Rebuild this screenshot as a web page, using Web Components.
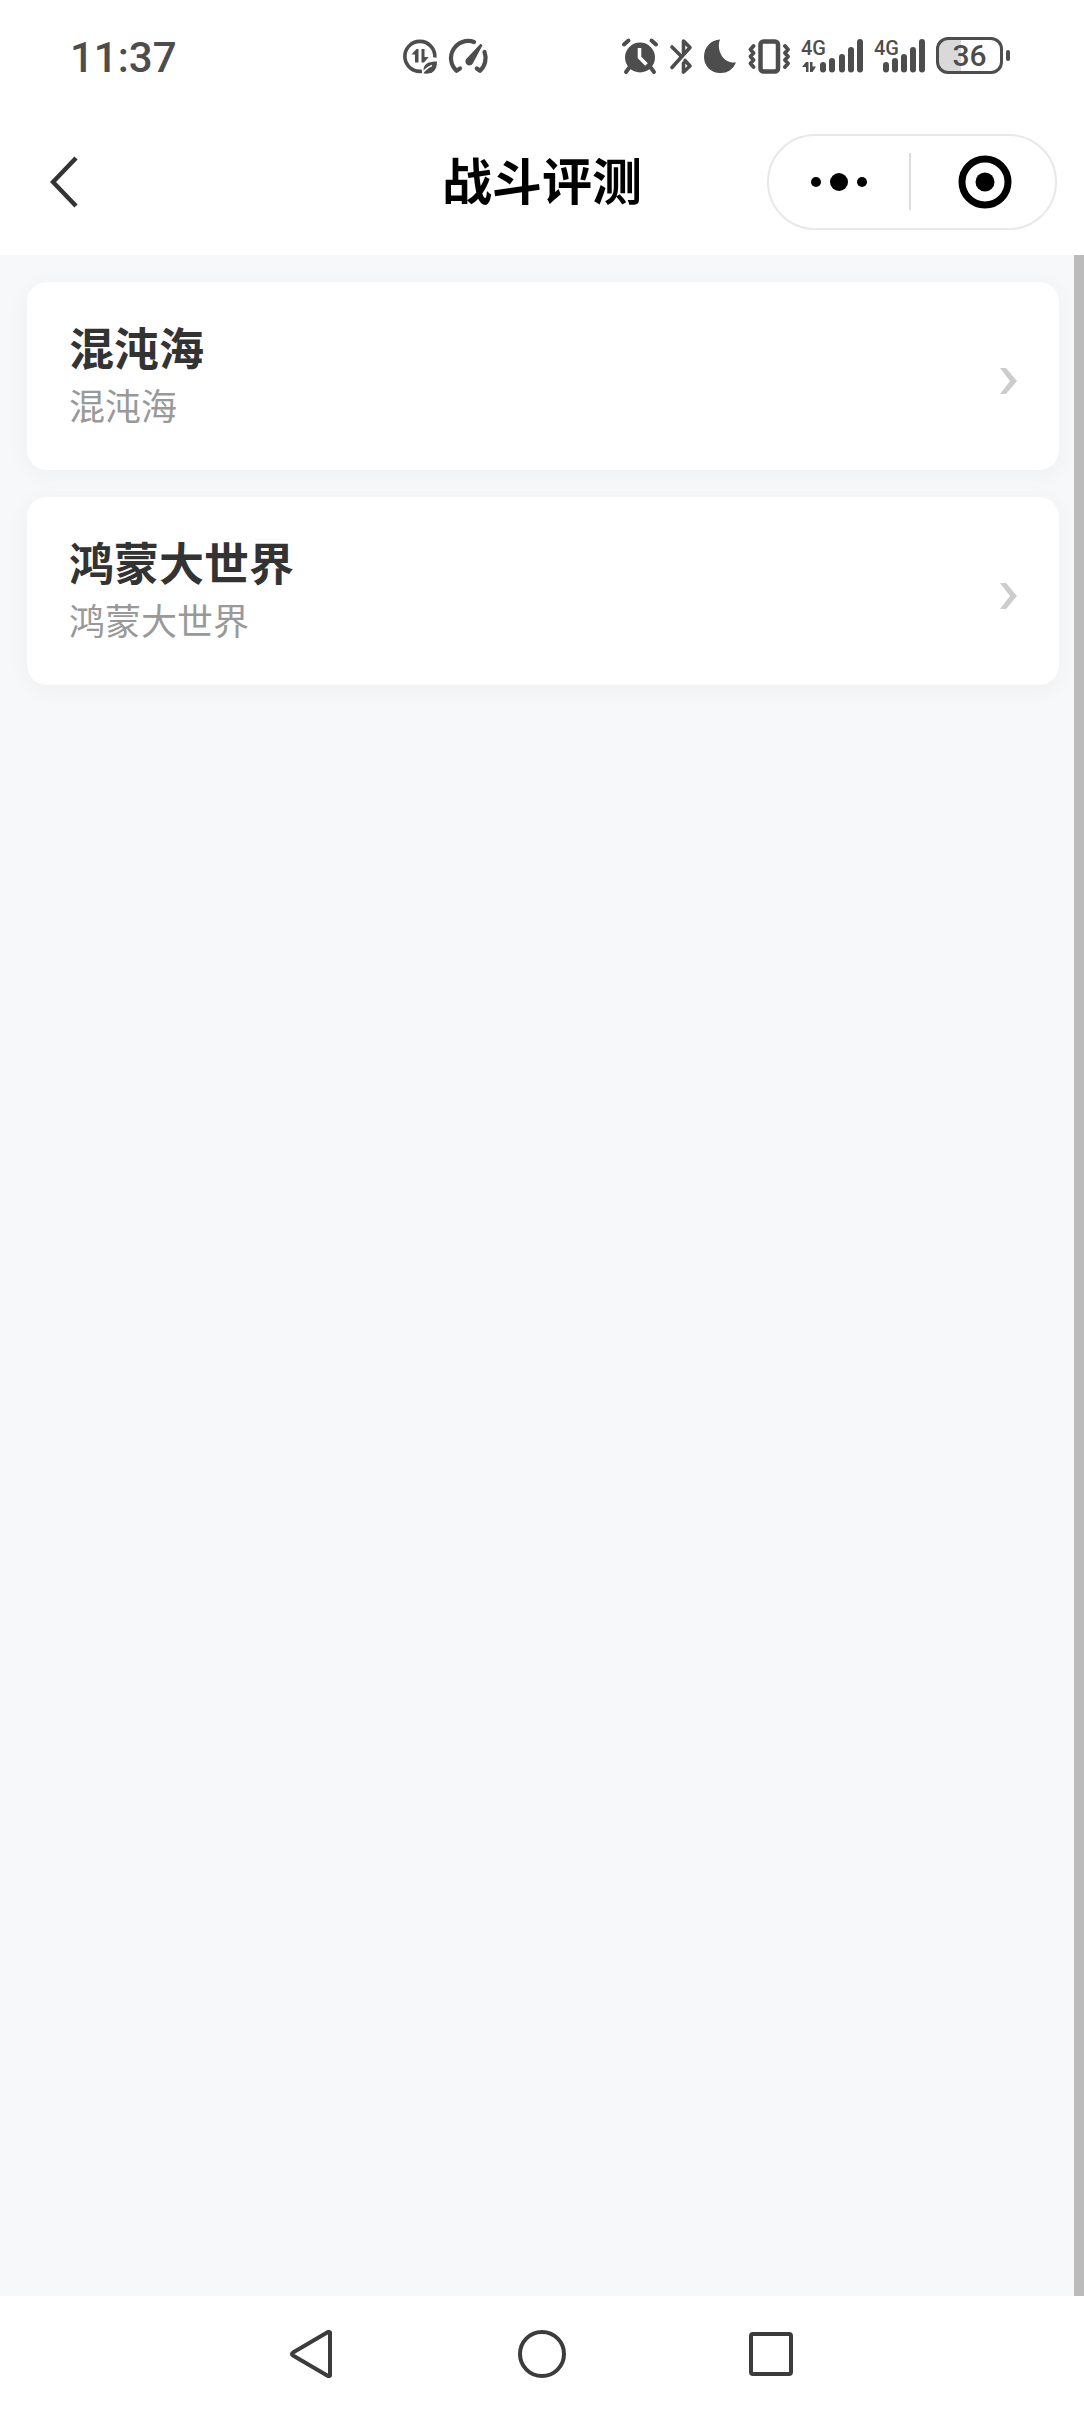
<!DOCTYPE html>
<html lang="zh-CN">
<head>
<meta charset="utf-8">
<meta name="viewport" content="width=device-width, initial-scale=1">
<title>战斗评测</title>
<style>
body {
  margin: 0;
  font-family: "Noto Sans CJK SC", "Noto Sans", sans-serif;
  background: #fff;
}
</style>
</head>
<body>
<app-screen>
  <status-bar slot="top" time="11:37" battery="36"></status-bar>
  <title-bar slot="top">战斗评测</title-bar>
  <world-card name="混沌海">混沌海</world-card>
  <world-card name="鸿蒙大世界">鸿蒙大世界</world-card>
  <system-nav slot="bottom"></system-nav>
</app-screen>
<script>
// icons of the status bar, all 40 high so they share one centre line
const icons = {
  data: [38, `<path d="M33.8 22.500A15 15 0 1 0 21 36.200" fill="none" stroke="currentColor" stroke-width="3.600"/>
<path d="M10.500 19.500l5-5.500h2v13.500H14v-8zM20.500 14h3v8h4.200L23 27.500h-2.500z"/>
<path d="M36 26.500c-8 0-13.500 2-13.500 8.500v3.500c8 .8 13.500-2 13.500-12z"/>
<path d="M21.500 38.500c2-4 5-6 9.500-8" fill="none" stroke="#fff" stroke-width="1.600"/>`],
  gauge: [42, `<path d="M27 7A17.200 17.200 0 0 0 9.500 35.800L13 33.500M37.500 17a17.200 17.200 0 0 1-4.500 18.800L29.800 33.500" fill="none" stroke="currentColor" stroke-width="4.200" stroke-linejoin="round" stroke-linecap="round"/>
<path d="M19.200 24L33.500 8.800l2 1.400L25.800 28.500a4 4 0 1 1-6.600-4.500z"/>`],
  alarm: [38, `<circle cx="19" cy="22.500" r="15"/>
<path d="M3 9.500L7.500 5.500M30.500 5.500L35 9.500M8 33l-3 4M30 33l3 4" fill="none" stroke="currentColor" stroke-width="4" stroke-linecap="round"/>
<path d="M18.500 13v9.500l7 7" fill="none" stroke="#fff" stroke-width="3.600"/>`],
  bluetooth: [24, `<path d="M3 12l9 9M14.500 18V6L21 12.500 3 32.500M16 25.500l5 5.500-6.500 6V28" fill="none" stroke="currentColor" stroke-width="3.600" stroke-linejoin="round" stroke-linecap="round"/>`],
  moon: [34, `<path d="M17 4.500C13 15 20 29 33 27.500A16 16 0 0 1 17 38C8 38 1 31 1 22 1 12 8 5 17 4.500z"/>`],
  vibrate: [44, `<rect x="13.500" y="6.500" width="17.500" height="30" rx="3" fill="none" stroke="currentColor" stroke-width="4.500"/>
<path d="M6.500 11L3.500 14.500l3 3.500-3 3.500 3 3.500-3 3.500 3 3.500M38 11l3 3.500-3 3.500 3 3.500-3 3.500 3 3.500-3 3.500" fill="none" stroke="currentColor" stroke-width="3.800" stroke-linejoin="round" stroke-linecap="round"/>`],
  signalData: [63, `<text x="0" y="20">4G</text>
<path d="M1 32l4-5h2.500v10H5V32zM9 27h2.500v4.500H15L11.500 37H9z"/>
<path d="M22 30v4.500M31 26v8.500M41 22v12.500M50 15v19.500M59 7v27.500" stroke="currentColor" stroke-width="6" stroke-linecap="round"/>`],
  signal: [52, `<text x="0" y="20">4G</text>
<path d="M12 30v4.500M21 26v8.500M30 22v12.500M39 15v19.500M48 7v27.500" stroke="currentColor" stroke-width="6" stroke-linecap="round"/>`]
}

class StatusIcon extends HTMLElement {
  connectedCallback() {
    const [width, content] = icons[this.getAttribute('name')]
    this.attachShadow({mode: 'open'}).innerHTML = `<style>
:host {
  display: block;
  flex: none;
}
svg {
  display: block;
}
text {
  font: 500 20px Roboto, sans-serif;
}
</style>
<svg width="${width}" height="40" viewBox="0 0 ${width} 40" fill="currentColor">${content}</svg>`
  }
}

class BatteryLevel extends HTMLElement {
  connectedCallback() {
    const level = this.getAttribute('level')
    this.attachShadow({mode: 'open'}).innerHTML = `<style>
:host {
  display: flex;
  align-items: center;
  gap: 3px;
  margin-right: 2px;
}
.cell {
  box-sizing: border-box;
  width: 67px;
  height: 37px;
  border: 3px solid currentColor;
  border-radius: 12px;
  background: linear-gradient(to right, #d9d9d9 ${level}%, #fff ${level}%);
  font: 500 30px/32px Roboto, sans-serif;
  text-align: center;
}
.tip {
  width: 4px;
  height: 11px;
  border-radius: 2px;
  background: currentColor;
}
</style>
<div class="cell">${level}</div>
<div class="tip"></div>`
  }
}

class StatusBar extends HTMLElement {
  connectedCallback() {
    this.attachShadow({mode: 'open'}).innerHTML = `<style>
:host {
  display: grid;
  grid-template-columns: 37% 20% 1fr;
  align-items: center;
  height: 110px;
  color: #4d4d4d;
}
time {
  padding: 6px 0 0 70px;
  font: 500 42px/48px Roboto, sans-serif;
}
.group {
  display: flex;
  align-items: center;
  gap: 10px;
}
.notices {
  gap: 8px;
}
.system {
  justify-content: flex-end;
  padding-right: 72px;
}
</style>
<time>${this.getAttribute('time')}</time>
<div class="group notices">
  <status-icon name="data"></status-icon>
  <status-icon name="gauge"></status-icon>
</div>
<div class="group system">
  <status-icon name="alarm"></status-icon>
  <status-icon name="bluetooth"></status-icon>
  <status-icon name="moon"></status-icon>
  <status-icon name="vibrate"></status-icon>
  <status-icon name="signalData"></status-icon>
  <status-icon name="signal"></status-icon>
  <battery-level level="${this.getAttribute('battery')}"></battery-level>
</div>`
  }
}

class TitleBar extends HTMLElement {
  connectedCallback() {
    this.attachShadow({mode: 'open'}).innerHTML = `<style>
:host {
  box-sizing: border-box;
  display: grid;
  grid-template-columns: 1fr auto 1fr;
  align-items: center;
  height: 145px;
  padding: 0 27px 2px;
  color: #000;
}
h1 {
  margin: 0;
  padding-bottom: 8px;
  font-size: 50px;
  line-height: 72px;
  font-weight: 700;
}
button {
  display: flex;
  align-items: center;
  justify-content: center;
  padding: 0;
  border: 0;
  background: none;
  color: inherit;
}
.back {
  width: 76px;
  height: 76px;
}
.capsule {
  justify-self: end;
  box-sizing: border-box;
  display: flex;
  align-items: center;
  width: 290px;
  height: 96px;
  border: 2px solid #e8e8e8;
  border-radius: 48px;
}
.capsule button {
  flex: 1;
  height: 100%;
}
.line {
  width: 2px;
  height: 57px;
  background: #ddd;
}
.close {
  padding-left: 4px;
}
</style>
<button class="back" aria-label="返回">
  <svg width="30" height="52" viewBox="0 0 30 52"><path d="M26 2L3 26l23 24" fill="none" stroke="#333" stroke-width="4.500"/></svg>
</button>
<h1><slot></slot></h1>
<div class="capsule">
  <button aria-label="更多">
    <svg width="56" height="18" viewBox="0 0 56 18"><circle cx="5" cy="9" r="5"/><circle cx="28" cy="9" r="9"/><circle cx="51" cy="9" r="5"/></svg>
  </button>
  <div class="line"></div>
  <button class="close" aria-label="关闭">
    <svg width="54" height="54" viewBox="0 0 54 54"><circle cx="27" cy="27" r="23" fill="none" stroke="#000" stroke-width="7"/><circle cx="27" cy="27" r="9.500"/></svg>
  </button>
</div>`
  }
}

class WorldCard extends HTMLElement {
  connectedCallback() {
    this.attachShadow({mode: 'open'}).innerHTML = `<style>
:host {
  display: block;
}
a {
  display: flex;
  align-items: center;
  justify-content: space-between;
  padding: 40px 42px 42px;
  border-radius: 20px;
  background: #fff;
  box-shadow: 0 4px 24px rgba(0,0,0,0.04);
  text-decoration: none;
}
.text {
  display: flex;
  flex-direction: column;
  gap: 8px;
}
h2 {
  margin: 0;
  color: #333;
  font-size: 45px;
  line-height: 50px;
  font-weight: 700;
}
p {
  margin: 0;
  color: #999;
  font-size: 36px;
  line-height: 48px;
}
</style>
<a href="#">
  <div class="text">
    <h2>${this.getAttribute('name')}</h2>
    <p><slot></slot></p>
  </div>
  <svg width="18" height="38" viewBox="0 0 18 38" aria-hidden="true"><path d="M1 12h6l11 13L7 38H1l10-13z" fill="#ccc"/></svg>
</a>`
  }
}

class SystemNav extends HTMLElement {
  connectedCallback() {
    this.attachShadow({mode: 'open'}).innerHTML = `<style>
:host {
  display: flex;
  justify-content: center;
  height: 116px;
}
nav {
  display: flex;
  width: 64%;
}
button {
  flex: 1;
  display: flex;
  align-items: center;
  justify-content: center;
  padding: 0;
  border: 0;
  background: none;
}
svg {
  fill: none;
  stroke: #3c3c3c;
  stroke-width: 4;
  stroke-linejoin: round;
}
</style>
<nav>
  <button aria-label="返回"><svg width="48" height="48" viewBox="0 0 48 48"><path d="M43 2.500v43q-1 1-2 .5L6 25.500q-2-1.500 0-3L41 2q1-.5 2 .5z"/></svg></button>
  <button aria-label="主屏幕"><svg width="48" height="48" viewBox="0 0 48 48"><circle cx="24" cy="24" r="22"/></svg></button>
  <button aria-label="最近任务"><svg width="48" height="48" viewBox="0 0 48 48"><rect x="2" y="4" width="40" height="40" rx="2"/></svg></button>
</nav>`
  }
}

class AppScreen extends HTMLElement {
  connectedCallback() {
    this.attachShadow({mode: 'open'}).innerHTML = `<style>
:host {
  display: flex;
  flex-direction: column;
  min-height: 100vh;
}
main {
  position: relative;
  flex: 1;
  display: flex;
  flex-direction: column;
  gap: 27px;
  padding: 27px 25px 27px 27px;
  background: #f7f8fa;
}
/* scroll thumb floats over the list */
main::after {
  content: '';
  position: absolute;
  top: 0;
  right: 0;
  bottom: 0;
  width: 10px;
  background: #bbb;
}
</style>
<slot name="top"></slot>
<main><slot></slot></main>
<slot name="bottom"></slot>`
  }
}

customElements.define('status-icon', StatusIcon)
customElements.define('battery-level', BatteryLevel)
customElements.define('status-bar', StatusBar)
customElements.define('title-bar', TitleBar)
customElements.define('world-card', WorldCard)
customElements.define('system-nav', SystemNav)
customElements.define('app-screen', AppScreen)
</script>
</body>
</html>
